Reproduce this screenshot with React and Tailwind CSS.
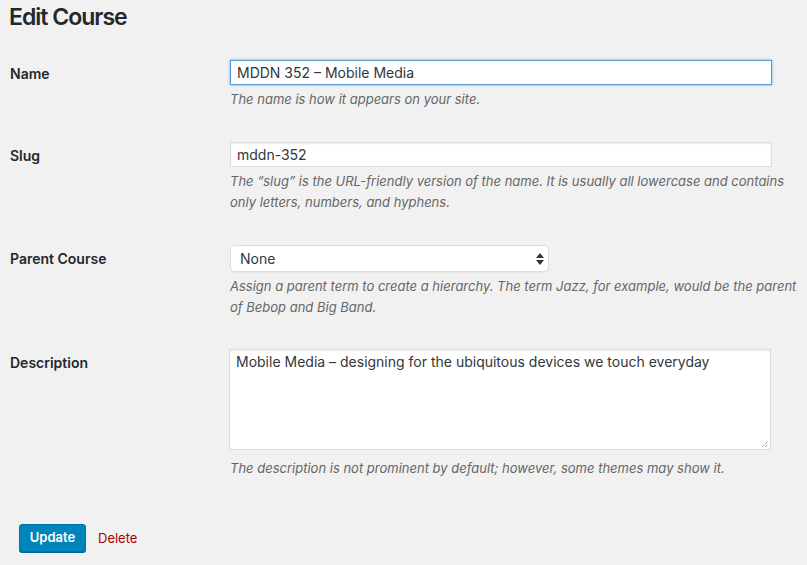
import React from "react";

const font = { fontFamily: "Inter, 'Noto Sans', sans-serif" };

function Row({ label, children, className = "" }) {
  return (
    <div className={`flex ${className}`}>
      <div className="w-[230px] shrink-0 pl-[10px] pt-[16px]">
        <label className="text-[14px] leading-[18px] font-semibold text-[#23282d]">
          {label}
        </label>
      </div>
      <div className="pt-[15px] flex-1">{children}</div>
    </div>
  );
}

function Desc({ children, className = "mt-[4px]" }) {
  return (
    <p className={`${className} text-[13px] leading-[21px] italic text-[#666]`}>
      {children}
    </p>
  );
}

export default function App() {
  return (
    <div
      className="min-h-[565px] w-[807px] bg-[#f1f1f1] text-[#23282d] overflow-hidden"
      style={font}
    >
      <h1 className="pl-[9px] pt-[3px] text-[23px] leading-[29px] font-semibold text-[#23282d] tracking-[-1px]">
        Edit Course
      </h1>

      <div className="mt-[13px]">
        <Row label="Name" className="h-[82px]">
          <input
            defaultValue="MDDN 352 – Mobile Media"
            className="block w-[542px] h-[25px] border border-[#5b9dd9] shadow-[0_0_2px_rgba(30,140,190,0.8)] bg-white px-[6px] text-[14px] text-[#32373c] outline-none"
            style={font}
          />
          <Desc>The name is how it appears on your site.</Desc>
        </Row>

        <Row label="Slug" className="h-[103px]">
          <input
            defaultValue="mddn-352"
            className="block w-[542px] h-[25px] border border-[#ddd] shadow-[inset_0_1px_2px_rgba(0,0,0,0.07)] bg-white px-[6px] text-[14px] text-[#32373c] outline-none"
            style={font}
          />
          <Desc>
            The “slug” is the URL-friendly version of the name. It is usually
            all lowercase and contains
            <br />
            only letters, numbers, and hyphens.
          </Desc>
        </Row>

        <Row label="Parent Course" className="h-[104px]">
          <div className="relative w-[319px] h-[27px] rounded-[5px] border border-[#ddd] bg-white shadow-[0_1px_1px_rgba(0,0,0,0.04)] flex items-center pl-[9px] text-[14px] text-[#32373c]">
            None
            <svg
              className="absolute right-[4px] top-[7px]"
              width="8"
              height="12"
              viewBox="0 0 8 12"
            >
              <path d="M4 0 L8 5 H0 Z" fill="#333" />
              <path d="M0 7 H8 L4 12 Z" fill="#333" />
            </svg>
          </div>
          <Desc>
            Assign a parent term to create a hierarchy. The term Jazz, for
            example, would be the parent
            <br />
            of Bebop and Big Band.
          </Desc>
        </Row>

        <Row label="Description" className="h-[175px]">
          <div className="relative w-[542px] -ml-[1px]">
            <textarea
              defaultValue="Mobile Media – designing for the ubiquitous devices we touch everyday"
              className="block w-[542px] h-[101px] border border-[#ddd] bg-white px-[6px] py-[2px] text-[14px] leading-[20px] text-[#32373c] outline-none resize-none shadow-[inset_0_1px_2px_rgba(0,0,0,0.07)]"
              style={font}
            />
            <svg
              className="absolute right-[2px] bottom-[2px]"
              width="8"
              height="8"
              viewBox="0 0 8 8"
            >
              <path d="M1 7 L7 1 M4 7 L7 4" stroke="#777" strokeWidth="1" strokeDasharray="1 1" />
            </svg>
          </div>
          <Desc className="mt-[8px]">
            The description is not prominent by default; however, some themes
            may show it.
          </Desc>
        </Row>
      </div>

      <div className="flex items-center pl-[19px] mt-[15px] gap-[12px]">
        <button
          className="h-[28px] w-[67px] rounded-[3px] bg-[#0085ba] border border-[#0073aa] shadow-[0_1px_0_#006799] text-white text-[13px] font-semibold"
          style={font}
        >
          Update
        </button>
        <a className="text-[13px] text-[#a00] pt-[1px]">Delete</a>
      </div>
    </div>
  );
}
